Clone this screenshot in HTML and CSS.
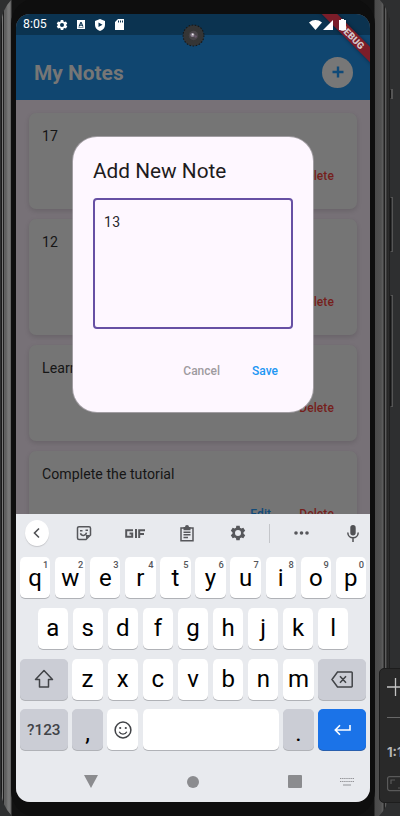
FILE: index.html
```html
<!DOCTYPE html>
<html lang="en">
<head>
<meta charset="utf-8">
<title>My Notes</title>
<link rel="stylesheet" href="styles.css">
</head>
<body>
<div class="phone"><div class="bezel"><div class="screen">
  <div class="status">
    <span class="time">8:05</span>
    <svg class="s-gear" viewBox="0 0 24 24"><path fill-rule="evenodd" d="M9.500 2h5l.5 3 2 1 3-1 2.500 4.300-2.300 2v1.400l2.300 2-2.500 4.300-3-1-2 1-.5 3h-5L9 19l-2-1-3 1-2.500-4.300 2.300-2v-1.400l-2.300-2L4 5l3 1 2-1zM12 8a4 4 0 1 0 0 8 4 4 0 0 0 0-8z"/></svg>
    <svg class="s-a" viewBox="0 0 8 9"><path fill-rule="evenodd" d="M0 0h8v9H0zM3.400 2 1.500 6.500h1.200L3 5.700h2l.3.800h1.200L4.600 2zM4 3.300l.6 1.500H3.400zM1.500 7.300v.5h5v-.5z"/></svg>
    <svg class="s-shield" viewBox="0 0 10 12"><path fill-rule="evenodd" d="M5 0l5 2v4c0 3-2 5-5 6-3-1-5-3-5-6V2zM3.500 3.500v4.600L7.500 5.800z"/></svg>
    <svg class="s-sd" viewBox="0 0 9 11"><path fill-rule="evenodd" d="M3 0h6v11H0V3zM3 1.500v2h1v-2zm2 0v2h1v-2zm2 0v2h1v-2z"/></svg>
    <span class="fill"></span>
    <svg class="s-wifi" viewBox="0 0 13 10"><path d="M0 2.500C4-.8 9-.8 13 2.500L6.500 10z"/></svg>
    <svg class="s-cell" viewBox="0 0 10 10"><path d="M10 0v10H0z"/></svg>
    <svg class="s-batt" viewBox="0 0 7 11"><path d="M2 0h3v1h2v10H0V1h2z"/></svg>
  </div>
  <header class="bar">
    <h1>My Notes</h1>
    <div class="add"><svg viewBox="0 0 12 12"><path d="M6 .5v11M.5 6h11" fill="none" stroke="#104a78" stroke-width="2.400"/></svg></div>
  </header>
  <main class="notes">
    <article class="card"><p>17</p><div class="acts"><b class="edit">Edit</b><b class="del">Delete</b></div></article>
    <article class="card tall"><p>12</p><div class="acts"><b class="edit">Edit</b><b class="del">Delete</b></div></article>
    <article class="card"><p>Learn Flutter</p><div class="acts"><b class="edit">Edit</b><b class="del">Delete</b></div></article>
    <article class="card"><p>Complete the tutorial</p><div class="acts"><b class="edit">Edit</b><b class="del">Delete</b></div></article>
  </main>
  <section class="keyboard">
    <div class="tools">
      <div class="back"><svg viewBox="0 0 12 12"><path d="M8 1.500 3.500 6 8 10.500" fill="none" stroke="#505154" stroke-width="1.600"/></svg></div>
      <svg class="t-sticker" viewBox="0 0 16 16"><path d="M3 1.700h10a1.500 1.500 0 0 1 1.500 1.500V10L10 14.500H3A1.500 1.500 0 0 1 1.500 13V3.200A1.500 1.500 0 0 1 3 1.700zM4.500 8.200c.8 3 5.200 3 6-.5" fill="none" stroke="#56575b" stroke-width="1.500"/><path d="M4 5h2.500v1.500H4zM9.500 4.500H12V6H9.500zM10 10h4l-4 4z" fill="#56575b"/></svg>
      <svg class="t-gif" viewBox="0 0 20 9"><path d="M8 1.200H1.200v6.600h6V4.500H4.500M11 0v9M14.200 9V1.200H20M14.200 5h4.800" fill="none" stroke="#56575b" stroke-width="2"/></svg>
      <svg class="t-clip" viewBox="0 0 14 17"><path d="M1 3h12v12.800H1zM3.500 7.200h7M3.500 9.800h7M3.500 12.400h4.500" fill="none" stroke="#56575b" stroke-width="1.500"/><path d="M3.500 2H5a2 2 0 0 1 4 0h1.500v3.200h-7z" fill="#56575b"/></svg>
      <svg class="t-gear" viewBox="0 0 24 24"><path fill="#56575b" fill-rule="evenodd" d="M9.500 1h5l.5 3 2 1.200 3-1.200 2.800 4.700-2.500 2v2.600l2.500 2-2.800 4.700-3-1.200-2 1.200-.5 3h-5L9 20l-2-1.200L4 20l-2.800-4.700 2.500-2v-2.600l-2.500-2L4 4l3 1.200L9 4zM12 7.500a4.500 4.500 0 1 0 0 9 4.500 4.500 0 0 0 0-9z"/></svg>
      <i class="sep"></i>
      <svg class="t-dots" viewBox="0 0 15 4"><g fill="#56575b"><circle cx="2" cy="2" r="1.800"/><circle cx="7.500" cy="2" r="1.800"/><circle cx="13" cy="2" r="1.800"/></g></svg>
      <svg class="t-mic" viewBox="0 0 12 17"><rect x="3.300" width="5.400" height="10.500" rx="2.700" fill="#505154"/><path d="M.8 7.500c0 7 10.400 7 10.400 0M6 12.500V17" fill="none" stroke="#505154" stroke-width="1.500"/></svg>
    </div>
    <div class="row">
      <div class="key">q<sup>1</sup></div><div class="key">w<sup>2</sup></div><div class="key">e<sup>3</sup></div><div class="key">r<sup>4</sup></div><div class="key">t<sup>5</sup></div><div class="key">y<sup>6</sup></div><div class="key">u<sup>7</sup></div><div class="key">i<sup>8</sup></div><div class="key">o<sup>9</sup></div><div class="key">p<sup>0</sup></div>
    </div>
    <div class="row second">
      <div class="key">a</div><div class="key">s</div><div class="key">d</div><div class="key">f</div><div class="key">g</div><div class="key">h</div><div class="key">j</div><div class="key">k</div><div class="key">l</div>
    </div>
    <div class="row">
      <div class="key mod wide"><svg width="20" height="20" viewBox="0 0 20 20"><path d="M10 1.500 18.500 10.500H14.500V18H5.500V10.500H1.500z" fill="none" stroke="#414347" stroke-width="1.500" stroke-linejoin="round"/></svg></div>
      <div class="key">z</div><div class="key">x</div><div class="key">c</div><div class="key">v</div><div class="key">b</div><div class="key">n</div><div class="key">m</div>
      <div class="key mod wide"><svg width="22" height="17" viewBox="0 0 22 17"><path d="M6.500 1H20.500a.7.700 0 0 1 .7.700V15.300a.7.700 0 0 1-.7.700H6.500L1 8.500zM9 5.200l6 6.600M15 5.200l-6 6.600" fill="none" stroke="#414347" stroke-width="1.500"/></svg></div>
    </div>
    <div class="row">
      <div class="key mod wide num">?123</div>
      <div class="key mod punct">,</div>
      <div class="key"><svg width="18" height="18" viewBox="0 0 18 18"><circle cx="9" cy="9" r="7.900" fill="none" stroke="#414347" stroke-width="1.500"/><circle cx="6.200" cy="7" r="1.100" fill="#414347"/><circle cx="11.800" cy="7" r="1.100" fill="#414347"/><path d="M5.200 10.800c1.500 3 6.100 3 7.600 0" fill="none" stroke="#414347" stroke-width="1.300"/></svg></div>
      <div class="key space"></div>
      <div class="key mod punct">.</div>
      <div class="key wide enter"><svg width="17" height="12" viewBox="0 0 17 12"><path d="M16 1v5H1.500M6 1.300 1.300 6 6 10.700" fill="none" stroke="#fff" stroke-width="1.600"/></svg></div>
    </div>
    <nav class="nav">
      <svg width="14" height="13" viewBox="0 0 14 13"><path d="M0 0h14L7 13z" fill="#8b8c8f"/></svg>
      <svg width="12" height="12" viewBox="0 0 12 12"><circle cx="6" cy="6" r="6" fill="#8b8c8f"/></svg>
      <svg width="14" height="13" viewBox="0 0 14 13"><rect width="14" height="13" rx="1" fill="#8b8c8f"/></svg>
      <svg width="14" height="8" viewBox="0 0 14 8"><path d="M0 .5h14M0 3.500h14" stroke="#929397" stroke-dasharray="1.400 .7"/><path d="M3 7h8" stroke="#929397" stroke-width="1.200"/></svg>
    </nav>
  </section>
  <div class="debug">DEBUG</div>
  <div class="dialog">
    <h2>Add New Note</h2>
    <div class="field">13</div>
    <div class="buttons"><span class="cancel">Cancel</span><span class="save">Save</span></div>
  </div>
</div></div></div>
<svg class="camera" viewBox="0 0 22 22"><circle cx="11" cy="11" r="10" fill="#353535" stroke="#171717" stroke-dasharray="1.500 1.500"/><circle cx="11" cy="11" r="4.500" fill="#484448"/><circle cx="10" cy="10.500" r="2" fill="#8d8292"/><circle cx="10.300" cy="10" r=".8" fill="#eee"/><circle cx="13" cy="12" r="1.200" fill="#67586c"/></svg>
<i class="side s1"></i><i class="side s2"></i><i class="side s3"></i>
<aside class="zoombar">
  <svg width="17" height="18" viewBox="0 0 17 18"><path d="M0 9h17M8.500 0v18" stroke="#c4c4c4" stroke-width="1.300"/></svg>
  <hr>
  <span>1:1</span>
  <svg width="20" height="16" viewBox="0 0 20 16"><rect x=".6" y=".6" width="18" height="14" rx="2" fill="none" stroke="#5a5a5a" stroke-width="1.200"/><path d="M4 8V4h4M11 12h4V8" fill="none" stroke="#5a5a5a" stroke-width="1.200"/></svg>
</aside>
</body>
</html>
```
FILE: styles.css
```css
* { box-sizing: border-box; }
html, body { margin: 0; width: 400px; height: 816px; overflow: hidden; }
body { position: relative; background: #2e2f30; font-family: Roboto, sans-serif; }
h1, h2, p { margin: 0; font-weight: 400; }
svg { display: block; flex: none; }

.phone {
  width: 389px; height: 837px; margin-top: -11px; margin-left: 1px; padding: 9px 13px 9px 10px;
  border-radius: 36px;
  background: linear-gradient(90deg, #191919 0 1px, #777 1px 2px, #202020 2px 3px, #606060 3px 5px, #777 7px, #757575 9px, #555 10px, #111 11px 373px, #4a4a4a 374px, #505050 380px, #606060 382px, #202020 383px 384px, #5d5d5d 384px 385px, #1a1a1a 386px, #333 387px, #191919 389px);
}
.bezel { width: 364px; height: 819px; padding: 16px 5px 15px; border-radius: 26px; background: #0e0e0e; }
.screen {
  position: relative; width: 354px; height: 788px; overflow: hidden;
  display: flex; flex-direction: column; border-radius: 14px; background: #777177;
}
.status { position: relative; height: 21px; flex: none; display: flex; align-items: center; padding: 0 24px 0 7px; background: #0b3350; fill: #fff; }
.status svg { position: relative; z-index: 2; }
.status { position: static; }
.time { width: 24px; font-size: 12.3px; line-height: 21px; color: #fff; white-space: nowrap; }
.s-gear { width: 12px; height: 12px; margin-left: 9px; }
.s-a { width: 8px; height: 9px; margin-left: 9px; }
.s-shield { width: 10px; height: 12px; margin-left: 10px; }
.s-sd { width: 9px; height: 11px; margin-left: 10px; }
.fill { flex: 1; }
.s-wifi { width: 13px; height: 10px; }
.s-cell { width: 10px; height: 10px; margin-left: 1px; }
.s-batt { width: 7px; height: 11px; margin-left: 6px; }
.bar { height: 65px; flex: none; display: flex; justify-content: space-between; align-items: center; padding: 9px 17px 0 18px; background: #104670; }
.bar h1 { padding-top: 2px; font-size: 20.9px; line-height: 26px; font-weight: 700; color: #767676; }
.add { width: 31px; height: 31px; display: grid; place-items: center; border-radius: 50%; background: #777; }
.add svg { width: 12px; height: 12px; }

.notes { height: 414px; flex: none; overflow: hidden; display: flex; flex-direction: column; gap: 10px; padding: 13px 13px 0; }
.card { height: 96px; flex: none; padding: 14px 23px 24px 13px; display: flex; flex-direction: column; justify-content: space-between; border-radius: 7px; background: #757575; box-shadow: 0 2px 5px rgba(0,0,0,.13); }
.card.tall { height: 116px; }
.card p { font-size: 14.1px; line-height: 18px; letter-spacing: .05px; color: #161616; }
.acts { display: flex; justify-content: flex-end; gap: 28px; font-size: 12px; line-height: 18px; font-weight: 500; letter-spacing: .1px; }
.acts b { font-weight: 500; }
.edit { color: #124b79; }
.del { color: #751f1c; }

.keyboard { height: 288px; flex: none; padding: 0 4px; background: #e8eaee; }
.tools { height: 43px; padding: 0 7px 5px 5px; display: flex; align-items: center; }
.back { width: 25px; height: 26px; border-radius: 50%; display: grid; place-items: center; background: #fff; box-shadow: 0 1px 1px #c5c6ca; }
.back svg { width: 12px; height: 12px; }
.t-sticker { width: 16px; height: 16px; margin-left: 27px; }
.t-gif { width: 20px; height: 9px; margin-left: 33px; }
.t-clip { width: 14px; height: 17px; margin-left: 35px; }
.t-gear { width: 16px; height: 16px; margin-left: 36px; }
.sep { width: 1px; height: 19px; margin-left: 23px; background: #c4c6ca; }
.t-dots { width: 15px; height: 4px; margin-left: 24px; }
.t-mic { width: 12px; height: 17px; margin-left: 38px; }
.row { height: 41px; margin-bottom: 9.8px; display: flex; gap: 4.8px; }
.second { padding: 0 17.6px; }
.key {
  position: relative; flex: 1 1 0; min-width: 0; display: flex; align-items: center; justify-content: center;
  border-radius: 5px; background: #fff; box-shadow: 0 1px 0 #b0b2b7; color: #000; font-size: 24px; line-height: 40px;
}
.key sup { position: absolute; top: 2px; right: 2px; font-size: 9.3px; font-weight: 500; line-height: 11px; color: #55565a; }
.mod { background: #cbcdd5; }
.wide { flex: 0 0 47.6px; }
.num { font-size: 15.3px; font-weight: 500; color: #414347; }
.punct { flex: 0 0 30.3px; padding-top: 7px; }
.space { flex: 4 1 0; }
.row:nth-child(5) .key:nth-child(3) { flex: 0 0 30.3px; }
.enter { background: #1b73e8; box-shadow: 0 1px 0 #285fae; }
.nav { height: 42px; display: grid; grid-template-columns: 14px 12px 14px 14px; column-gap: 90px; padding: 1px 0 0 64px; align-items: center; }
.nav svg:nth-child(2) { margin-left: -1px; }
.nav svg:nth-child(3) { margin-left: -2px; }
.nav svg:nth-child(4) { margin-left: -54px; }

.debug {
  position: absolute; top: 17px; right: -32px; width: 100px; height: 11px; transform: rotate(45deg);
  background: #7b1d29; box-shadow: 0 0 4px rgba(0,0,0,.4); color: #d5c7ca; font-size: 9.5px; font-weight: 900; line-height: 11px; text-align: center;
}
.dialog { position: absolute; left: 57px; top: 123px; width: 240px; height: 275px; padding: 21px 20px; border-radius: 24px; background: #fef7ff; box-shadow: 0 0 0 1px rgba(190,184,191,.6); }
.dialog h2 { font-size: 20.8px; line-height: 26px; color: #1d1b20; white-space: nowrap; }
.field { width: 200px; height: 131px; margin-top: 14px; padding: 13px 9px; border: 2px solid #6750a4; border-radius: 4px; font-size: 14px; line-height: 18px; letter-spacing: .3px; color: #29272c; }
.buttons { display: flex; justify-content: flex-end; gap: 32px; padding: 33px 15px 0 0; font-size: 12px; line-height: 18px; font-weight: 500; }
.cancel { color: #9e9ba0; }
.save { color: #2196f3; }

.camera { position: absolute; left: 182px; top: 24px; width: 23px; height: 23px; }
.side { position: absolute; left: 390px; width: 3px; border: 1px solid #555; border-left-color: #151515; background: #303132; }
.s1 { top: 89px; height: 10px; background: #555; }
.s2 { top: 197px; height: 55px; }
.s3 { top: 295px; height: 112px; }
.zoombar { position: absolute; left: 379px; top: 668px; width: 40px; height: 135px; padding: 9px 0 0 7px; border-radius: 5px; background: #292929; border: 1px solid #1d1d1d; overflow: hidden; }
.zoombar hr { width: 30px; height: 1px; margin: 21px 0 27px; border: 0; background: #686868; }
.zoombar span { display: block; height: 14px; margin-bottom: 17px; font: 700 13px/14px Inter, sans-serif; color: #b5b5b5; }
```
